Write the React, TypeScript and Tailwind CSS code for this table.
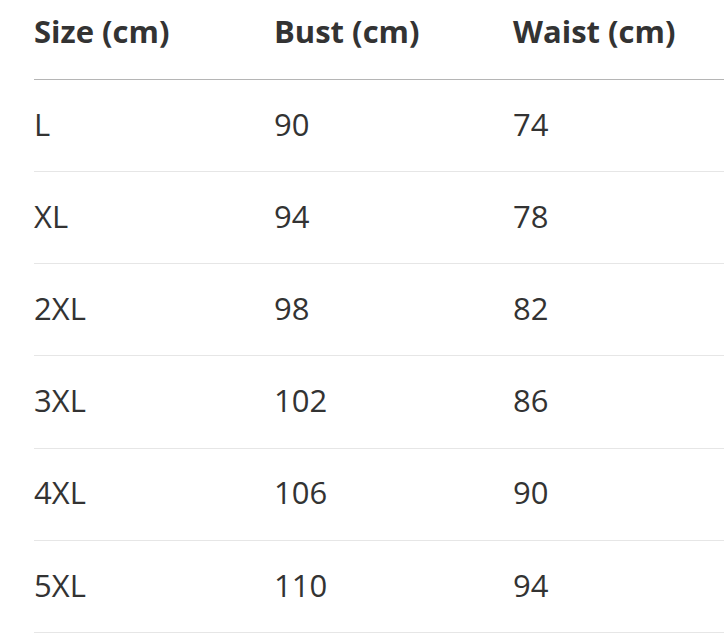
import React from 'react';

const rows = [
  ['L', '90', '74'],
  ['XL', '94', '78'],
  ['2XL', '98', '82'],
  ['3XL', '102', '86'],
  ['4XL', '106', '90'],
  ['5XL', '110', '94'],
];

const App: React.FC = () => {
  return (
    <div
      className="min-h-screen w-full overflow-hidden bg-white pl-[34px] text-[#333333]"
      style={{ fontFamily: '"Open Sans", "Noto Sans", sans-serif' }}
    >
      <div className="w-[760px]">
        <div className="grid h-[80px] grid-cols-[240px_239px_1fr] items-center border-b border-[#b5b5b5] pb-[17px] text-[31px] font-bold">
          <div>Size (cm)</div>
          <div>Bust (cm)</div>
          <div>Waist (cm)</div>
        </div>
        {rows.map((r) => (
          <div
            key={r[0]}
            className="grid h-[92.17px] grid-cols-[240px_239px_1fr] items-center border-b border-[#e6e6e6] pb-[3px] text-[31px]"
          >
            <div>{r[0]}</div>
            <div>{r[1]}</div>
            <div>{r[2]}</div>
          </div>
        ))}
      </div>
    </div>
  );
};

export default App;
